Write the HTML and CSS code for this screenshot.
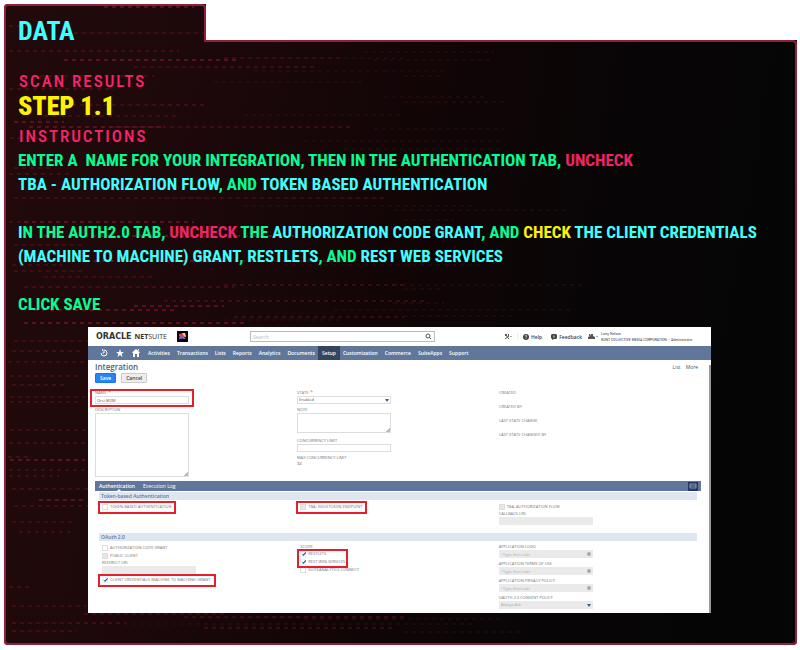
FILE: index.html
```html
<!DOCTYPE html>
<html lang="en">
<head>
<meta charset="utf-8">
<title>Data - Step 1.1</title>
<link rel="stylesheet" href="styles.css">
</head>
<body>
<main class="folder">
  <div class="backdrop">
    <svg class="scanlines" width="800" height="642" aria-hidden="true">
      <path class="dash bright" d="M100 3h90M60 56h175M10 118h50M25 123h135M20 218h170M40 232h250M90 257h130M30 306h140M130 302h90M20 319h220M6 456h75M35 496h45"/>
      <path class="dash" d="M5 22h20M70 29h130M5 47h170M130 63h180M220 54h120M20 72h130M5 85h105M60 101h140M40 112h135M110 123h240M6 134h40M10 164h36M5 170h60M10 194h195M160 194h220M5 218h22M10 241h70M8 261h50M190 257h150M10 267h70M40 273h110M20 283h210M220 281h180M160 297h260M230 313h170M10 337h75M8 347h70M4 358h80M6 372h72M8 381h52M6 393h75M6 398h70M6 426h76M5 439h78M4 453h20M5 466h78M5 472h50M8 485h76M10 502h74M8 518h60M15 528h55M5 583h20M8 602h74M80 610h140M8 619h115M8 627h65M200 624h190M180 613h220"/>
      <path class="dash faint" d="M340 54h60M250 67h130M380 67h60M400 72h40M210 78h150M380 93h100M400 98h100M240 111h160M370 125h130M340 145h160M300 137h200M200 156h280M390 206h175M240 202h230M400 216h50M280 261h200M390 281h190M400 285h40M390 299h50M330 306h240M400 312h110M220 316h120M300 615h200M120 620h350M400 628h120M360 48h130M370 56h120"/>
    </svg>
  </div>
  <header class="folder-tab"><h1>DATA</h1></header>
  <section class="folder-body">
    <h2 class="caption">SCAN RESULTS</h2>
    <p class="step">STEP 1.1</p>
    <h2 class="caption">INSTRUCTIONS</h2>
    <div class="copy">
      <p>ENTER A&nbsp; NAME FOR YOUR INTEGRATION, THEN IN THE AUTHENTICATION TAB, <span class="pink">UNCHECK</span><br>
      <span class="cyan">TBA - AUTHORIZATION FLOW</span>, AND <span class="cyan">TOKEN BASED AUTHENTICATION</span></p>
      <p><span class="cyan">I</span>N THE AUTH2.0 TAB, <span class="pink">UNCHECK</span> THE <span class="cyan">AUTHORIZATION CODE GRANT</span>, AND <span class="yellow">CHECK</span> <span class="cyan">THE CLIENT CREDENTIALS<br>(MACHINE TO MACHINE) GRANT</span>, <span class="cyan">RESTLETS</span>, AND <span class="cyan">REST WEB SERVICES</span></p>
      <p>CLICK SAVE</p>
    </div>

    <section class="app" aria-label="Oracle NetSuite">
      <header class="app-header">
        <div class="brand"><span class="oracle">ORACLE</span><span class="netsuite"><b>NET</b>SUITE</span></div>
        <svg class="company" viewBox="0 0 11 11" aria-hidden="true"><path fill="#050505" d="M0 0h11v11H0z"/><path fill="#e8385c" d="M2 3l6-1 1 4-6 2z"/><path fill="#5b79d0" d="M2 4h2l5 4H6z"/><path fill="#f0d078" d="M5 2l3 0 1 4-2-1z"/><path fill="#a04ab4" d="M2 6l3 1-1 1-2 0z"/></svg>
        <div class="search">
          <input type="search" placeholder="Search" aria-label="Search">
          <svg viewBox="0 0 7 7" aria-hidden="true"><circle cx="3" cy="3" r="2" fill="none" stroke="#555"/><path d="M4 4l2 2" stroke="#555"/></svg>
        </div>
        <div class="tools">
          <a href="#" class="roles" aria-label="Shortcuts"><svg width="8" height="7" viewBox="0 0 8 7"><path d="M1 1l4 5M1 6l4-3" fill="none" stroke="#555"/><path d="M1 1h2v2H1zM4 1h1v2H4zM6 3h2L7 4z" fill="#555"/></svg></a>
          <a href="#" class="help"><svg width="6" height="6" viewBox="0 0 6 6"><circle cx="3" cy="3" r="3" fill="#444"/><path d="M2 2q1-1 2 0-1 1-1 1.500M3 4.200v.8" fill="none" stroke="#fff" stroke-width=".7"/></svg>Help</a>
          <a href="#" class="feedback"><svg width="6" height="6" viewBox="0 0 6 6"><path d="M1 0h4l1 1v3L5 5H3L1 6V5L0 4V1z" fill="#444"/><path d="M2 2h2M2 3h2" stroke="#fff" stroke-width=".5"/></svg>Feedback</a>
          <a href="#" class="user"><svg width="10" height="7" viewBox="0 0 10 7"><path d="M0 6V4l2-1 1-2h2v2l2 1v2zM1 1h1v2H1z" fill="#555"/><path d="M8 3h2L9 4z" fill="#555"/></svg><span>Larry Nelson<br>KUNT COLLECTIVE MEDIA CORPORATION – Administrator</span></a>
        </div>
      </header>
      <nav class="app-nav">
        <a href="#" class="glyph" aria-label="Recent"><svg viewBox="0 0 8 8"><path d="M1 4a3 3 0 1 0 3-3M4 2v2h-1.500" fill="none" stroke="#fff"/><path d="M2 0l2 1-2 1z" fill="#fff"/></svg></a>
        <a href="#" class="glyph" aria-label="Favorites"><svg viewBox="0 0 8 8"><path d="M4 0l1 3h3L5.600 4.800 6.500 8 4 6 1.500 8l.9-3.200L0 3h3z" fill="#fff"/></svg></a>
        <a href="#" class="glyph" aria-label="Home"><svg viewBox="0 0 8 8"><path d="M4 0l4 3.500-1 .5v4H5V5H3v3H1V4L0 3.500zM6 0h1v2L6 1z" fill="#fff"/></svg></a>
        <a href="#">Activities</a><a href="#">Transactions</a><a href="#">Lists</a><a href="#">Reports</a><a href="#">Analytics</a><a href="#">Documents</a><a href="#" class="current">Setup</a><a href="#">Customization</a><a href="#">Commerce</a><a href="#">SuiteApps</a><a href="#">Support</a>
      </nav>
      <form class="app-page">
        <div class="title-row"><h3>Integration</h3><div class="page-links"><a href="#">List</a><a href="#">More</a></div></div>
        <div class="actions"><button type="button" class="primary">Save</button><button type="button">Cancel</button></div>
        <div class="record">
          <div class="column">
            <div class="field marked mark-name"><label for="name">NAME <i>*</i></label><input id="name" value="Orei M2M"></div>
            <div class="field"><label for="description">DESCRIPTION</label><textarea id="description" class="tall"></textarea></div>
          </div>
          <div class="column">
            <div class="field"><label for="state">STATE <i>*</i></label><div class="select"><select id="state"><option>Enabled</option></select></div></div>
            <div class="field"><label for="note">NOTE</label><textarea id="note"></textarea></div>
            <div class="field spaced"><label for="limit">CONCURRENCY LIMIT</label><input id="limit"></div>
            <div class="field"><span class="label">MAX CONCURRENCY LIMIT</span><span class="value">34</span></div>
          </div>
          <div class="column facts"><span>CREATED</span><span>CREATED BY</span><span>LAST STATE CHANGE</span><span>LAST STATE CHANGED BY</span></div>
        </div>
        <div class="tabs"><button type="button" class="active">Authentication</button><button type="button">Execution Log</button>
          <button type="button" class="layout" aria-label="Layout"><svg viewBox="0 0 10 8"><path d="M2 2h6v4H2zM2 4h6" fill="none" stroke="#aebcd4" stroke-width=".7"/></svg></button></div>
        <div class="groups">
          <h4>Token-based Authentication</h4>
          <div class="group token">
            <div class="column"><label class="check marked mark-token"><input type="checkbox">TOKEN-BASED AUTHENTICATION</label></div>
            <div class="column"><label class="check marked mark-endpoint"><input type="checkbox" disabled>TBA: ISSUETOKEN ENDPOINT</label></div>
            <div class="column"><label class="check"><input type="checkbox" disabled>TBA: AUTHORIZATION FLOW</label>
              <div class="field"><label for="callback">CALLBACK URL</label><input id="callback" disabled></div></div>
          </div>
          <h4>OAuth 2.0</h4>
          <div class="group">
            <div class="column">
              <label class="check"><input type="checkbox">AUTHORIZATION CODE GRANT</label>
              <label class="check"><input type="checkbox" disabled>PUBLIC CLIENT</label>
              <div class="field redirect"><label for="redirect">REDIRECT URI</label><input id="redirect" disabled></div>
              <label class="check marked mark-client"><input type="checkbox" checked>CLIENT CREDENTIALS (MACHINE TO MACHINE) GRANT</label>
            </div>
            <div class="column">
              <span class="label scope">SCOPE</span>
              <div class="marked mark-scope">
                <label class="check"><input type="checkbox" checked>RESTLETS</label>
                <label class="check"><input type="checkbox" checked>REST WEB SERVICES</label>
              </div>
              <label class="check"><input type="checkbox">SUITEANALYTICS CONNECT</label>
            </div>
            <div class="column policies">
              <div class="field"><label for="logo">APPLICATION LOGO</label><div class="picker"><input id="logo" placeholder="&lt;Type then tab&gt;" disabled></div></div>
              <div class="field"><label for="terms">APPLICATION TERMS OF USE</label><div class="picker"><input id="terms" placeholder="&lt;Type then tab&gt;" disabled></div></div>
              <div class="field"><label for="privacy">APPLICATION PRIVACY POLICY</label><div class="picker"><input id="privacy" placeholder="&lt;Type then tab&gt;" disabled></div></div>
              <div class="field"><label for="consent">OAUTH 2.0 CONSENT POLICY</label><div class="select"><select id="consent" disabled><option>Always Ask</option></select></div></div>
            </div>
          </div>
        </div>
        <div class="scrollbar"></div>
      </form>
    </section>
  </section>
</main>
</body>
</html>
```
FILE: styles.css
```css
* { box-sizing: border-box; }
body { margin: 4px 3px 4px 4px; background: #fff; }
h1, h2, h3, h4, p { margin: 0; }
a { color: inherit; text-decoration: none; }

.folder {
  position: relative;
  font-family: "Roboto Condensed", "Roboto", sans-serif;
  font-weight: 700;
}
.backdrop {
  position: absolute;
  inset: 0;
  overflow: hidden;
  border-radius: 4px;
  clip-path: polygon(0 0, 202px 0, 202px 36px, 100% 36px, 100% 100%, 0 100%);
  background: linear-gradient(100deg, #220a0c 0%, #1c080a 25%, #110506 50%, #080506 72%, #050505 100%);
}
.scanlines { position: absolute; top: 0; left: 0; }
.dash { fill: none; stroke: #66131f; stroke-width: 2; stroke-dasharray: 4 4; opacity: .45; }
.dash.bright { stroke: #801827; opacity: .6; }
.dash.faint { stroke: #341015; opacity: .4; }

.folder-tab {
  position: relative;
  width: 202px;
  height: 38px;
  padding: 9px 12px 0;
  border: 2px solid #921f38;
  border-bottom: 0;
  border-radius: 4px 4px 0 0;
}
.folder-tab h1 { font-size: 26px; line-height: 32px; color: #42ffff; }
.folder-body {
  position: relative;
  padding: 28px 14px 30px 12px;
  border: 2px solid #921f38;
  border-top: 0;
  border-radius: 0 4px 4px 4px;
}
.folder-body::before {
  content: "";
  position: absolute;
  top: -2px;
  right: -2px;
  left: 198px;
  height: 6px;
  border: solid #921f38;
  border-width: 2px 2px 0 0;
  border-radius: 0 4px 0 0;
}
.caption { padding-left: 1px; font-size: 17px; font-weight: 500; line-height: 22px; letter-spacing: 2px; color: #f7256b; }
.step { margin-bottom: 5px; font-size: 26px; font-weight: 900; line-height: 28px; color: #fff200; }
.copy { display: grid; gap: 24px; margin: 1px 0 11px; font-size: 17px; line-height: 24px; color: #00ff95; white-space: nowrap; }
.pink { color: #ef2465; }
.cyan { color: #42ffff; }
.yellow { color: #fff200; }

.app { margin: 0 70px; background: #fff; color: #555; font: 5px/6px "Open Sans", sans-serif; }
.app input, .app textarea, .app select, .app button { font: inherit; color: inherit; }
.app-header { display: flex; align-items: center; height: 19px; padding-left: 8px; }
.brand { display: flex; align-items: center; gap: 3px; width: 81px; color: #333; line-height: 9px; }
.oracle { font-family: "DejaVu Sans", sans-serif; font-size: 8px; font-weight: 700; }
.netsuite { font-size: 7px; }
.company { width: 11px; height: 11px; margin-right: 62px; }
.search { display: flex; align-items: center; width: 185px; height: 11px; padding: 0 2px; border: 1px solid #bbb; }
.search input { flex: 1; min-width: 0; padding: 0; border: 0; outline: 0; background: none; }
.search input::placeholder { color: #bbb; }
.search svg { width: 7px; height: 7px; }
.tools { display: flex; flex: 1; align-items: center; margin-left: 69px; font-weight: 600; color: #444; white-space: nowrap; }
.tools a { display: flex; align-items: center; gap: 2px; }
.roles { padding-right: 5px; border-right: 1px solid #eee; }
.help { margin-left: 5px; }
.feedback { margin-left: 9px; }
.tools .user { margin-left: 6px; gap: 3px; font-family: "Roboto Condensed", "Lato", sans-serif; font-size: 4px; font-weight: 400; }

.app-nav { display: flex; align-items: center; gap: 7px; height: 14px; padding-left: 12px; background: #60779b; color: #fff; font-weight: 600; line-height: 14px; }
.glyph { display: flex; width: 8px; margin-right: 1px; }
.glyph svg { width: 8px; height: 8px; }
.app-nav .current { margin: 0 -4px; padding: 0 4px; background: #35455f; }

.app-page { position: relative; padding: 2px 10px 1px 7px; }
.title-row { display: flex; justify-content: space-between; height: 10px; line-height: 10px; }
.title-row h3 { font-size: 8px; font-weight: 600; color: #4d5f79; }
.page-links { display: flex; gap: 5px; margin-right: 3px; }
.actions { display: flex; gap: 5px; margin-top: 1px; }
.app .actions button { height: 10px; padding: 0 4px; border: 1px solid #ccc; border-radius: 1px; background: #eee; font-weight: 600; line-height: 8px; color: #444; }
.app .actions .primary { border-color: #1678e8; background: #2584f6; color: #fff; }
.record { display: grid; grid-template-columns: 1fr 1fr 1fr; height: 91px; margin-top: 7px; }
.label, .field label, .facts, .check { font-size: 4px; line-height: 6px; color: #777; }
.field { display: grid; width: 94px; margin-bottom: 3px; }
.field label { height: 6px; }
.field label i { color: #e08b18; font-size: 6px; line-height: 5px; }
.field input, .field select, .field textarea { display: block; width: 100%; height: 8px; margin: 0; padding: 0 1px; border: 1px solid #ddd; border-radius: 0; outline: 0; background: #fff; font-size: 4px; line-height: 6px; }
.field textarea { height: 20px; resize: vertical; }
.field textarea.tall { height: 64px; }
textarea::-webkit-resizer { background: linear-gradient(135deg, transparent 85%, #bbb 85%); }
.spaced { margin-top: 5px; }
.value { font-size: 4px; }
.facts { display: grid; grid-auto-rows: 6px; gap: 8px; align-content: start; }
.select, .picker { position: relative; }
.app select { appearance: none; opacity: 1; }
.select::after { content: ""; position: absolute; top: 3px; right: 2px; border: 2px solid transparent; border-top: 3px solid #435e89; border-bottom: 0; }
.picker::after { content: ""; position: absolute; top: 2px; right: 2px; width: 4px; height: 4px; border-radius: 2px; background: #aaa; }
.field input:disabled, .field select:disabled { border-color: #eaeaea; background: #eaeaea; color: #aaa; }
.field input::placeholder { color: #aaa; }

.tabs { display: flex; align-items: center; gap: 8px; height: 10px; padding: 0 3px 0 4px; background: #60779b; }
.app .tabs button { position: relative; padding: 0; border: 0; background: none; color: #fff; line-height: 10px; }
.app .tabs .active { font-weight: 600; }
.tabs .active::after { content: ""; position: absolute; bottom: 0; left: 50%; border: 2px solid transparent; border-top: 0; border-bottom-color: #fff; }
.app .tabs .layout { width: 10px; height: 9px; margin-left: auto; background: #253a63; }
.layout svg { display: block; }
.groups { padding: 1px 4px 0; }
.groups h4 { padding-left: 2px; background: #dfe6f0; font-size: 5px; font-weight: 600; line-height: 8px; color: #60779b; }
.group { display: grid; grid-template-columns: 1fr 1fr 1fr; padding: 3px 0 0 3px; }
.token { height: 33px; }
.check { display: flex; align-items: center; gap: 2px; width: max-content; height: 8px; }
.check input { appearance: none; width: 6px; height: 6px; margin: 0; border: 1px solid #ddd; background: #fff; }
.check input:disabled { background: #e8e8e8; }
.check input:checked { border-color: #eee; }
.check input:checked::after { content: ""; display: block; width: 5px; height: 4px; background: #28518f; clip-path: polygon(0 40%, 35% 60%, 85% 0, 100% 20%, 40% 100%); }
.redirect { margin-bottom: 2px; }
.scope { display: block; }
.policies .field { margin-bottom: 3px; }

.marked { position: relative; }
.marked::before { content: ""; position: absolute; border: 2px solid #e3202b; pointer-events: none; }
.mark-name::before { inset: -1px -5px -3px; }
.mark-token::before, .mark-endpoint::before, .mark-client::before { inset: -2px -5px -3px -4px; }
.mark-scope { width: max-content; }
.mark-scope::before { inset: -1px -3px -2px; }
.scrollbar { position: absolute; top: 5px; right: 0; bottom: 0; width: 2px; background: #999; }
```
